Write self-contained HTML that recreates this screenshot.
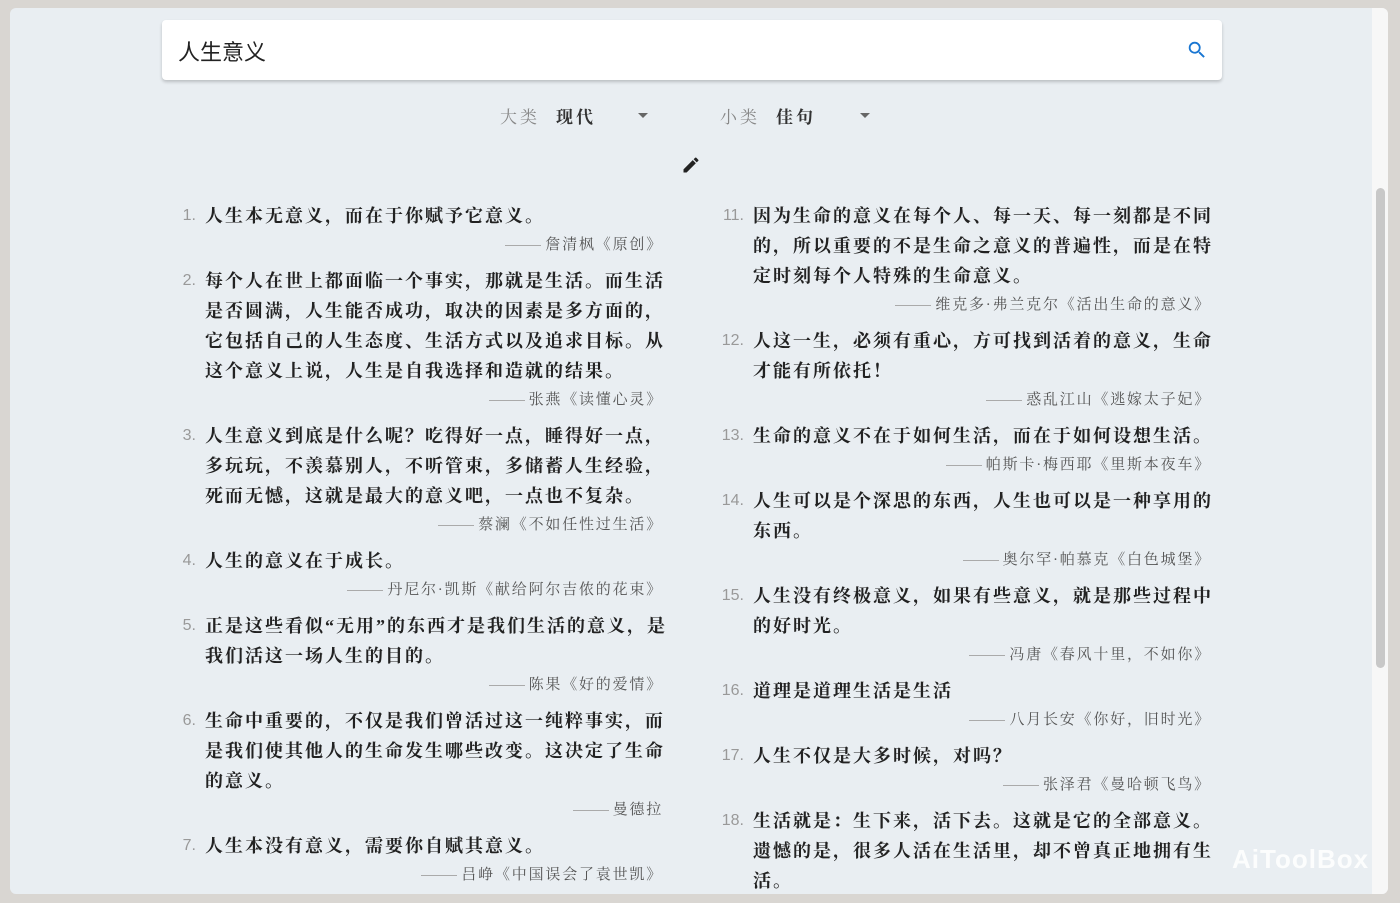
<!DOCTYPE html>
<html><head><meta charset="utf-8"><style>
*{margin:0;padding:0;box-sizing:border-box}
body{width:1400px;height:903px;background:#d9d6d2;position:relative;overflow:hidden;font-family:"Liberation Sans","Noto Sans CJK SC",sans-serif}
.win{position:absolute;left:10px;top:8px;width:1378px;height:886px;background:#e9eef2;border-radius:6px;overflow:hidden}
.sb{position:absolute;right:0;top:0;width:16px;height:100%;background:#f7f7f7}
.thumb{position:absolute;right:3px;top:180px;width:9px;height:480px;background:#c8c8c8;border-radius:5px}
.search{position:absolute;left:152px;top:12px;width:1060px;height:60px;background:#fff;border-radius:4px;box-shadow:0 2px 3px rgba(0,0,0,.2)}
.search span{position:absolute;left:16px;top:15px;font-size:22px;color:#222}
.sel{position:absolute;top:95px;font-family:"Liberation Serif","Noto Serif CJK SC",serif;font-size:17px;letter-spacing:3px}
.sel .l{color:#888}.sel .v{color:#333;font-weight:bold;margin-left:16px}
.tri{position:absolute;top:105px;width:0;height:0;border-left:5px solid transparent;border-right:5px solid transparent;border-top:5px solid #666}
.col{position:absolute;top:193px;font-family:"Liberation Serif","Noto Serif CJK SC",serif}
.it{position:relative;padding-left:33px;margin-bottom:6px}
.n{position:absolute;left:0;width:24px;text-align:right;top:0;line-height:30px;font-family:"Liberation Sans",sans-serif;font-size:16px;color:#999}
.t{font-size:18px;line-height:30px;font-weight:bold;color:#222;letter-spacing:2px;white-space:nowrap}
.a{text-align:right;font-size:15px;line-height:29px;color:#555;letter-spacing:1.8px;white-space:nowrap}
.a:before{content:"";display:inline-block;width:36px;height:1px;background:#aaa;vertical-align:middle;margin-right:4px}
</style></head><body>
<div class="win">
<div class="sb"><div class="thumb"></div></div>
<div class="search"><span>人生意义</span>
<svg style="position:absolute;right:14px;top:19px" width="22" height="22" viewBox="0 0 24 24"><path fill="#1976d2" d="M15.5 14h-.79l-.28-.27A6.47 6.47 0 0016 9.5 6.5 6.5 0 109.5 16c1.61 0 3.09-.59 4.23-1.57l.27.28v.79l5 4.99L20.49 19l-4.99-5zm-6 0C7.01 14 5 11.99 5 9.5S7.01 5 9.5 5 14 7.01 14 9.5 11.990 14 9.5 14z"/></svg></div>
<div class="sel" style="left:490px"><span class="l">大类</span><span class="v">现代</span></div>
<div class="tri" style="left:628px"></div>
<div class="sel" style="left:710px"><span class="l">小类</span><span class="v">佳句</span></div>
<div class="tri" style="left:850px"></div>
<svg style="position:absolute;left:671px;top:147px" width="20" height="20" viewBox="0 0 24 24"><path fill="#222" d="M3 17.25V21h3.75L17.81 9.94l-3.75-3.75L3 17.25zM20.71 7.04a1 1 0 000-1.41l-2.34-2.34a1 1 0 00-1.41 0l-1.83 1.83 3.75 3.75 1.830-1.83z"/></svg>
<div class="col" style="left:162px;width:491px">
<div class="it"><div class="n">1.</div><div class="t">人生本无意义，而在于你赋予它意义。</div><div class="a">詹清枫《原创》</div></div>
<div class="it"><div class="n">2.</div><div class="t">每个人在世上都面临一个事实，那就是生活。而生活<br>是否圆满，人生能否成功，取决的因素是多方面的，<br>它包括自己的人生态度、生活方式以及追求目标。从<br>这个意义上说，人生是自我选择和造就的结果。</div><div class="a">张燕《读懂心灵》</div></div>
<div class="it"><div class="n">3.</div><div class="t">人生意义到底是什么呢？吃得好一点，睡得好一点，<br>多玩玩，不羡慕别人，不听管束，多储蓄人生经验，<br>死而无憾，这就是最大的意义吧，一点也不复杂。</div><div class="a">蔡澜《不如任性过生活》</div></div>
<div class="it"><div class="n">4.</div><div class="t">人生的意义在于成长。</div><div class="a">丹尼尔·凯斯《献给阿尔吉侬的花束》</div></div>
<div class="it"><div class="n">5.</div><div class="t">正是这些看似“无用”的东西才是我们生活的意义，是<br>我们活这一场人生的目的。</div><div class="a">陈果《好的爱情》</div></div>
<div class="it"><div class="n">6.</div><div class="t">生命中重要的，不仅是我们曾活过这一纯粹事实，而<br>是我们使其他人的生命发生哪些改变。这决定了生命<br>的意义。</div><div class="a">曼德拉</div></div>
<div class="it"><div class="n">7.</div><div class="t">人生本没有意义，需要你自赋其意义。</div><div class="a">吕峥《中国误会了袁世凯》</div></div>
</div>
<div class="col" style="left:710px;width:491px">
<div class="it"><div class="n">11.</div><div class="t">因为生命的意义在每个人、每一天、每一刻都是不同<br>的，所以重要的不是生命之意义的普遍性，而是在特<br>定时刻每个人特殊的生命意义。</div><div class="a">维克多·弗兰克尔《活出生命的意义》</div></div>
<div class="it"><div class="n">12.</div><div class="t">人这一生，必须有重心，方可找到活着的意义，生命<br>才能有所依托！</div><div class="a">惑乱江山《逃嫁太子妃》</div></div>
<div class="it"><div class="n">13.</div><div class="t">生命的意义不在于如何生活，而在于如何设想生活。</div><div class="a">帕斯卡·梅西耶《里斯本夜车》</div></div>
<div class="it"><div class="n">14.</div><div class="t">人生可以是个深思的东西，人生也可以是一种享用的<br>东西。</div><div class="a">奥尔罕·帕慕克《白色城堡》</div></div>
<div class="it"><div class="n">15.</div><div class="t">人生没有终极意义，如果有些意义，就是那些过程中<br>的好时光。</div><div class="a">冯唐《春风十里，不如你》</div></div>
<div class="it"><div class="n">16.</div><div class="t">道理是道理生活是生活</div><div class="a">八月长安《你好，旧时光》</div></div>
<div class="it"><div class="n">17.</div><div class="t">人生不仅是大多时候，对吗？</div><div class="a">张泽君《曼哈顿飞鸟》</div></div>
<div class="it"><div class="n">18.</div><div class="t">生活就是：生下来，活下去。这就是它的全部意义。<br>遗憾的是，很多人活在生活里，却不曾真正地拥有生<br>活。</div></div>
</div>
<div style="position:absolute;left:1222px;top:836px;font-size:26px;color:rgba(255,255,255,.85);font-weight:bold;letter-spacing:1px">AiToolBox</div>
</div>
</body></html>
